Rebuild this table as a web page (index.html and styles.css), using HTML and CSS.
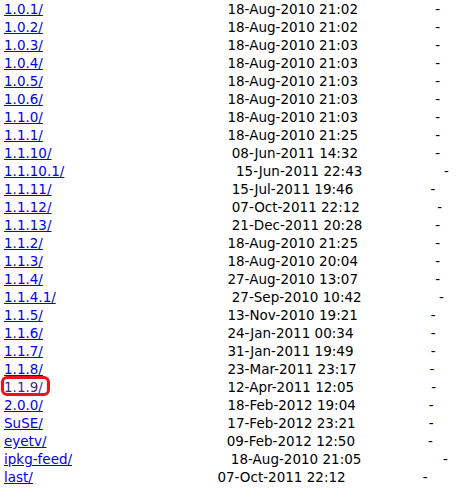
FILE: index.html
```html
<!DOCTYPE html>
<html lang="en">

<head>
    <meta charset="UTF-8">
    <title>Index of /</title>
    <link rel="stylesheet" href="styles.css">
</head>

<body>
    <pre id="listing" class="listing"></pre>
    <script>
        // name, spaces after name, date, spaces after date, marked
        const entries = [
            ['1.0.1/', 43, '18-Aug-2010 21:02', 18],
            ['1.0.2/', 43, '18-Aug-2010 21:02', 18],
            ['1.0.3/', 43, '18-Aug-2010 21:03', 18],
            ['1.0.4/', 43, '18-Aug-2010 21:03', 18],
            ['1.0.5/', 43, '18-Aug-2010 21:03', 18],
            ['1.0.6/', 43, '18-Aug-2010 21:03', 18],
            ['1.1.0/', 43, '18-Aug-2010 21:03', 18],
            ['1.1.1/', 43, '18-Aug-2010 21:25', 18],
            ['1.1.10/', 42, '08-Jun-2011 14:32', 18],
            ['1.1.10.1/', 40, '15-Jun-2011 22:43', 19],
            ['1.1.11/', 42, '15-Jul-2011 19:46', 18],
            ['1.1.12/', 42, '07-Oct-2011 22:12', 18],
            ['1.1.13/', 42, '21-Dec-2011 20:28', 17],
            ['1.1.2/', 43, '18-Aug-2010 21:25', 18],
            ['1.1.3/', 43, '18-Aug-2010 20:04', 18],
            ['1.1.4/', 43, '27-Aug-2010 13:07', 18],
            ['1.1.4.1/', 41, '27-Sep-2010 10:42', 18],
            ['1.1.5/', 43, '13-Nov-2010 19:21', 17],
            ['1.1.6/', 43, '24-Jan-2011 00:34', 18],
            ['1.1.7/', 43, '31-Jan-2011 19:49', 18],
            ['1.1.8/', 43, '23-Mar-2011 23:17', 17],
            ['1.1.9/', 43, '12-Apr-2011 12:05', 18, true],
            ['2.0.0/', 43, '18-Feb-2012 19:04', 17],
            ['SuSE/', 43, '17-Feb-2012 23:21', 17],
            ['eyetv/', 42, '09-Feb-2012 12:50', 17],
            ['ipkg-feed/', 37, '18-Aug-2010 21:05', 19],
            ['last/', 43, '07-Oct-2011 22:12', 18]
        ];

        const listing = document.querySelector('#listing');

        entries.forEach((item, i) => {
            const [name, pad1, date, pad2, marked] = item;
            const link = document.createElement('a');
            link.href = name;
            link.textContent = name;

            if (marked) {
                link.classList.add('visited');
                const mark = document.createElement('span');
                mark.classList.add('circled');
                mark.appendChild(link);
                listing.appendChild(mark);
            } else {
                listing.appendChild(link);
            }

            let rest = ' '.repeat(pad1) + date + ' '.repeat(pad2) + '-';
            if (i < entries.length - 1) rest += '\n';
            listing.appendChild(new Text(rest));
        });
    </script>
</body>

</html>
```

FILE: styles.css
```css
html {
    background: #fff;
}

body {
    margin: 0;
    padding: 0 0 0 4px;
}

.listing {
    margin: 0;
    font-family: "DejaVu Sans", sans-serif;
    font-size: 13.5px;
    line-height: 18px;
    color: #000;
}

.listing a {
    color: #0000ee;
    text-decoration: underline;
}

.listing a.visited {
    color: #551a8b;
}

/* red marker drawn round one entry */
.circled {
    position: relative;
}

.circled::after {
    content: "";
    position: absolute;
    left: -3px;
    right: -7px;
    top: -3px;
    bottom: -1px;
    border: 3px solid #e8141c;
    border-radius: 6px;
}
```
